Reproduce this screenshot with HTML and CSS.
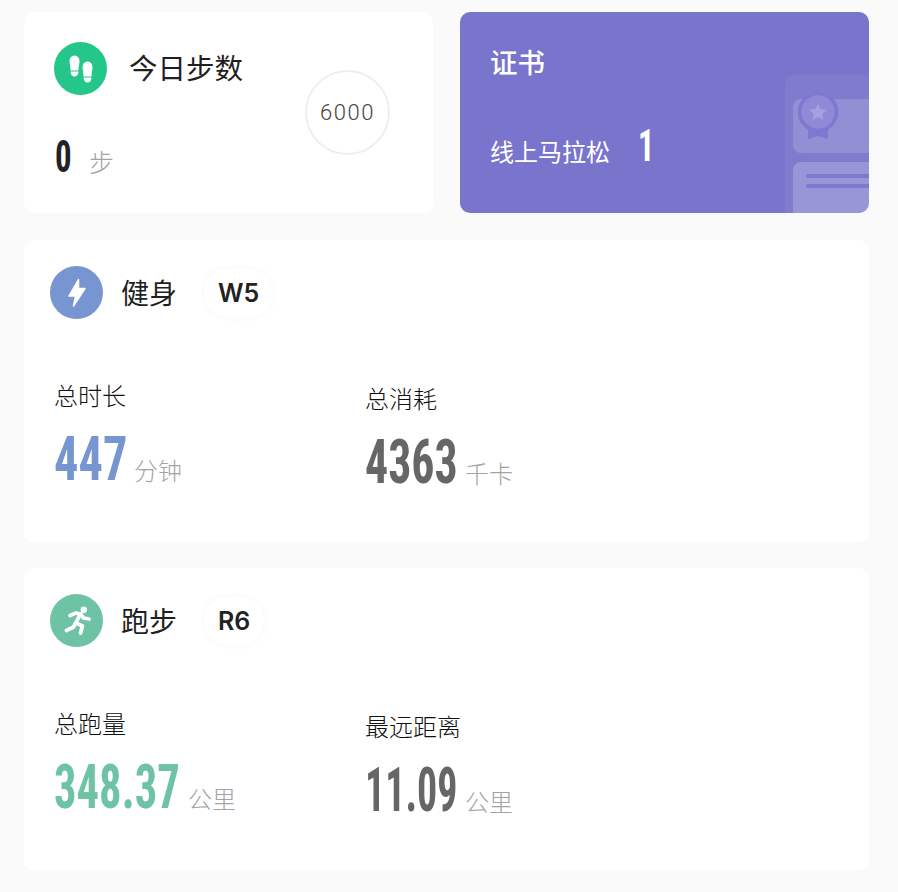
FILE: index.html
```html
<!DOCTYPE html>
<html lang="zh-CN">
<head>
    <meta charset="UTF-8">
    <meta name="viewport" content="width=device-width, initial-scale=1.0">
    <title>运动数据</title>
    <link rel="stylesheet" href="styles.css">
</head>
<body>
    <div class="container">
        <div class="top-row">
            <div class="card steps-card">
                <div class="steps-info">
                    <div class="steps-title">
                        <div class="icon icon-steps">
                            <svg width="32" height="32" viewBox="0 0 32 32" fill="#fff">
                                <path d="M4.500 8a5 5.500 0 0 1 10 0c0 3-1 5-1 9.500h-8c0-4.500-1-6.500-1-9.500z"/>
                                <path d="M5.500 18.500h8c0 3-1.800 5-4 5s-4-2-4-5z"/>
                                <path d="M17.500 14a5 5.500 0 0 1 10 0c0 3-1 5-1 9.500h-8c0-4.500-1-6.500-1-9.500z"/>
                                <path d="M18.500 24.500h8c0 3-1.800 5-4 5s-4-2-4-5z"/>
                            </svg>
                        </div>
                        <span class="title-text">今日步数</span>
                    </div>
                    <div class="steps-count">
                        <span class="num steps-num">0</span>
                        <span class="unit steps-unit">步</span>
                    </div>
                </div>
                <div class="goal">6000</div>
            </div>
            <div class="card cert-card">
                <div class="cert-title">证书</div>
                <div class="cert-row">
                    <span>线上马拉松</span>
                    <span class="num cert-num">1</span>
                </div>
                <svg class="cert-art" width="84" height="138" viewBox="0 0 84 138">
                    <path d="M0 8a8 8 0 0 1 8-8h76v138H0z" fill="#fff" fill-opacity=".05"/>
                    <path d="M8 32a8 8 0 0 1 8-8h68v54H16a8 8 0 0 1-8-8z" fill="#fff" fill-opacity=".15"/>
                    <path d="M8 95a8 8 0 0 1 8-8h68v51H8z" fill="#fff" fill-opacity=".2"/>
                    <path d="M23 99h61v4H23a2 2 0 0 1 0-4zM23 109h61v4H23a2 2 0 0 1 0-4z" fill="#7e78d0"/>
                    <path d="M23 48h20v16l-10-3-10 3z" fill="#7e78d0"/>
                    <circle cx="33" cy="37" r="18.500" fill="#8f89d8" stroke="#7e78d0" stroke-width="3.500"/>
                    <path d="M33 28.500l2.700 5.500 6 .8-4.400 4.200 1.100 6-5.400-2.900-5.400 2.900 1.100-6-4.400-4.200 6-.8z" fill="#a5a0e0"/>
                </svg>
            </div>
        </div>

        <div class="card stat-card">
            <div class="stat-head">
                <div class="icon icon-fit">
                    <svg width="24" height="30" viewBox="0 0 24 30" fill="#fff" stroke="#fff" stroke-width="1.500" stroke-linejoin="round">
                        <path d="M13.500 1.500L4 18h6.500L8.500 28 20 10.500h-6.500z"/>
                    </svg>
                </div>
                <span class="stat-name">健身</span>
                <span class="badge">W5</span>
            </div>
            <div class="stat-body">
                <div class="stat">
                    <div class="stat-label">总时长</div>
                    <div class="stat-value">
                        <span class="num big fit-color v-447">447</span>
                        <span class="unit">分钟</span>
                    </div>
                </div>
                <div class="stat stat-right">
                    <div class="stat-label">总消耗</div>
                    <div class="stat-value">
                        <span class="num big grey-color v-4363">4363</span>
                        <span class="unit">千卡</span>
                    </div>
                </div>
            </div>
        </div>

        <div class="card stat-card">
            <div class="stat-head">
                <div class="icon icon-run">
                    <svg width="32" height="32" viewBox="0 0 32 32" fill="none" stroke="#fff" stroke-width="3.800" stroke-linecap="round" stroke-linejoin="round">
                        <circle cx="22.800" cy="4.800" r="3.200" fill="#fff" stroke="none"/>
                        <path d="M9 10.500L15 8l4.500 1"/>
                        <path d="M19 9l-4 9"/>
                        <path d="M19.500 9l3 4 5.500 1"/>
                        <path d="M15 18l6.500 3-2 7"/>
                        <path d="M14.500 18l-2 4-7 3.500"/>
                    </svg>
                </div>
                <span class="stat-name">跑步</span>
                <span class="badge">R6</span>
            </div>
            <div class="stat-body">
                <div class="stat">
                    <div class="stat-label">总跑量</div>
                    <div class="stat-value">
                        <span class="num big run-color v-348">348.37</span>
                        <span class="unit">公里</span>
                    </div>
                </div>
                <div class="stat stat-right">
                    <div class="stat-label">最远距离</div>
                    <div class="stat-value">
                        <span class="num big grey-color v-1109">11.09</span>
                        <span class="unit">公里</span>
                    </div>
                </div>
            </div>
        </div>
    </div>
</body>
</html>
```

FILE: styles.css
```css
* {
    margin: 0;
    padding: 0;
    box-sizing: border-box;
}

body {
    font-family: "Noto Sans CJK SC", "Noto Sans", sans-serif;
    background: #fafafa;
    color: #222;
    overflow: hidden;
}

.container {
    width: 898px;
    height: 892px;
    padding: 12px 29px 0 24px;
    display: flex;
    flex-direction: column;
    gap: 26px;
}

.card {
    background: #fff;
    border-radius: 10px;
}

.top-row {
    display: flex;
    gap: 27px;
    height: 201px;
    margin-bottom: 1px;
}

.icon {
    width: 53px;
    height: 53px;
    border-radius: 50%;
    display: flex;
    align-items: center;
    justify-content: center;
    flex-shrink: 0;
}

.icon-steps {
    background: #24c68a;
}

.icon-fit {
    background: #7795d1;
}

.icon-run {
    background: #6ec3a5;
}

/* condensed numbers, squeezed to the DIN-like widths */
.num {
    display: inline-block;
    font-family: "Liberation Sans Narrow", "Roboto Condensed", "Liberation Sans", sans-serif;
    font-weight: 700;
    white-space: nowrap;
    transform-origin: left center;
}

.unit {
    font-size: 24px;
    color: #a3a3a3;
    font-weight: 300;
}

/* steps */
.steps-card {
    flex: 0 0 409px;
    padding: 30px 43px 0 30px;
    display: flex;
    justify-content: space-between;
}

.steps-title {
    display: flex;
    align-items: center;
    gap: 22px;
    font-size: 28.500px;
    color: #1f1f1f;
}

.title-text {
    margin-top: -4px;
}

.steps-count {
    margin-top: 37px;
    display: flex;
    align-items: baseline;
    gap: 19px;
    padding-left: 1px;
}

.steps-num {
    width: 15px;
    font-size: 45px;
    line-height: 50px;
    transform: scaleX(0.73);
}

.steps-unit {
    font-size: 25px;
}

.goal {
    width: 85px;
    height: 85px;
    margin-top: 28px;
    border: 2px solid #eee;
    border-radius: 50%;
    display: flex;
    align-items: center;
    justify-content: center;
    font-family: "Roboto", sans-serif;
    font-size: 22px;
    font-weight: 300;
    letter-spacing: 1.500px;
    color: #444;
}

/* certificate */
.cert-card {
    flex: 0 0 409px;
    position: relative;
    overflow: hidden;
    background: #7975cc;
    color: #fff;
    padding: 29px 30px 0 30px;
}

.cert-title {
    font-size: 27.500px;
    font-weight: 500;
    line-height: 40px;
}

.cert-row {
    margin-top: 40px;
    display: flex;
    align-items: baseline;
    gap: 28px;
    font-size: 24px;
}

.cert-num {
    width: 12px;
    font-size: 45px;
    line-height: 50px;
    transform: scaleX(0.72);
}

.cert-art {
    position: absolute;
    right: 0;
    bottom: 0;
}

/* stat cards */
.stat-card {
    height: 302px;
    padding: 26px 30px 0 26px;
}

.stat-head {
    display: flex;
    align-items: center;
    gap: 18px;
}

.stat-name {
    margin-top: -2px;
    font-size: 28px;
    color: #1f1f1f;
}

.badge {
    margin-left: 9px;
    height: 48px;
    padding: 0 14px;
    border-radius: 24px;
    background: #fff;
    box-shadow: 0 0 8px rgba(0, 0, 0, 0.04);
    display: flex;
    align-items: center;
    font-family: "Inter", sans-serif;
    font-size: 25px;
    font-weight: 600;
    color: #222;
}

.stat-body {
    margin-top: 60px;
    padding-left: 4px;
    display: flex;
}

.stat {
    width: 311px;
}

.stat-right {
    margin-top: 3px;
}

.stat-label {
    font-size: 24px;
    line-height: 32px;
    font-weight: 300;
    color: #111;
}

.stat-value {
    margin-top: 17px;
    display: flex;
    align-items: baseline;
    gap: 8px;
}

.big {
    font-size: 62px;
    line-height: 62px;
}

.v-447 {
    width: 72px;
    transform: scaleX(0.78);
}

.v-4363 {
    width: 92px;
    transform: scaleX(0.74);
}

.v-348 {
    width: 126px;
    transform: scaleX(0.72);
}

.v-1109 {
    width: 92px;
    transform: scaleX(0.645);
}

.fit-color {
    color: #7795d1;
}

.run-color {
    color: #6ec3a5;
}

.grey-color {
    color: #666;
}
```
